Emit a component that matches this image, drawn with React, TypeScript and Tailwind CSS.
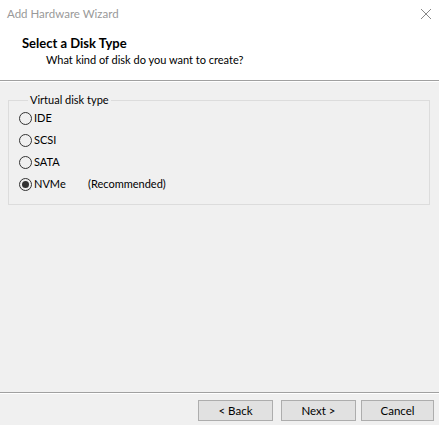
import { useState } from 'react';

const diskTypes = [
  { id: 'ide', label: 'IDE' },
  { id: 'scsi', label: 'SCSI' },
  { id: 'sata', label: 'SATA' },
  { id: 'nvme', label: 'NVMe', note: '(Recommended)' },
];

function Radio({ checked }: { checked: boolean }) {
  return (
    <span className="flex h-[13px] w-[13px] items-center justify-center rounded-full border border-[#333333] bg-[#f0f0f0]">
      {checked && <span className="h-[7px] w-[7px] rounded-full bg-[#333333]" />}
    </span>
  );
}

function WizardButton({ children, className = '' }: { children: React.ReactNode; className?: string }) {
  return (
    <button className={`h-[21px] border border-[#adadad] bg-[#e1e1e1] text-[11.5px] text-black ${className}`}>
      {children}
    </button>
  );
}

export default function App() {
  const [selected, setSelected] = useState('nvme');

  return (
    <div className="flex h-[425px] w-[439px] flex-col bg-[#f0f0f0] font-['Lato',sans-serif] text-[11px] text-black">
      {/* Header */}
      <div className="h-[81px] border-b border-[#a0a0a0] bg-white">
        <div className="flex h-[28px] items-center justify-between pl-[7px] pr-[6px]">
          <span className="text-[11.5px] text-[#999999]">Add Hardware Wizard</span>
          <svg width="12" height="12" viewBox="0 0 12 12" className="mr-[1px]">
            <path d="M1 1 L11 11 M11 1 L1 11" stroke="#888" strokeWidth="1" />
          </svg>
        </div>
        <div className="pl-[22px] pt-[7px] text-[13px] font-bold leading-[17px]">Select a Disk Type</div>
        <div className="pl-[46px] leading-[16px]">What kind of disk do you want to create?</div>
      </div>

      {/* Body */}
      <div className="flex-1 border-t border-white pl-[8px] pr-[9px] pt-[11px]">
        <fieldset className="h-[112px] border border-[#dcdcdc] px-[10px]">
          <legend className="ml-[9px] px-[2px] leading-[14px]">Virtual disk type</legend>
          <div className="flex flex-col gap-[5px] pt-[3px]">
            {diskTypes.map((t) => (
              <label
                key={t.id}
                className="flex h-[17px] cursor-default items-center"
                onClick={() => setSelected(t.id)}
              >
                <Radio checked={selected === t.id} />
                <span className="ml-[2px] w-[54px]">{t.label}</span>
                {t.note && <span>{t.note}</span>}
              </label>
            ))}
          </div>
        </fieldset>
      </div>

      {/* Footer */}
      <div className="h-[33px] border-t border-[#a0a0a0]">
        <div className="flex border-t border-white pt-[6px] pl-[198px]">
          <WizardButton className="w-[75px]">&lt; Back</WizardButton>
          <WizardButton className="ml-[8px] w-[75px]">Next &gt;</WizardButton>
          <WizardButton className="ml-[5px] w-[73px]">Cancel</WizardButton>
        </div>
      </div>
    </div>
  );
}
